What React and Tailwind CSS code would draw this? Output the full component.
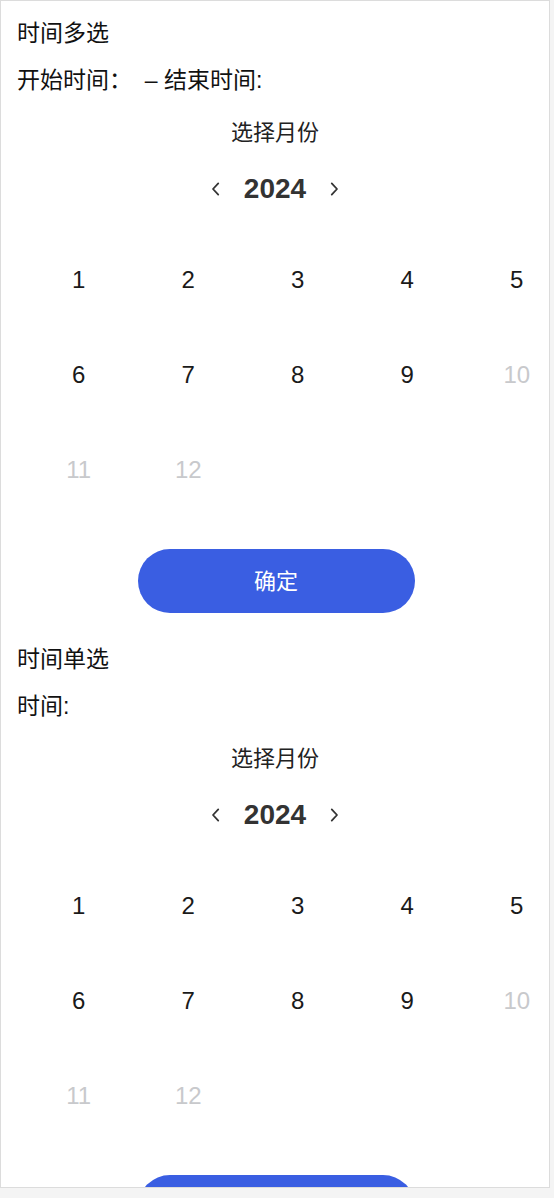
const months = [1, 2, 3, 4, 5, 6, 7, 8, 9, 10, 11, 12]

const ChevronLeft = () => (
  <svg width="18" height="18" viewBox="0 0 24 24" fill="none" stroke="#333" strokeWidth="2.4" strokeLinecap="round" strokeLinejoin="round">
    <path d="M15 4.5l-7 7.5 7 7.5" />
  </svg>
)

const ChevronRight = () => (
  <svg width="18" height="18" viewBox="0 0 24 24" fill="none" stroke="#333" strokeWidth="2.4" strokeLinecap="round" strokeLinejoin="round">
    <path d="M9 4.5l7 7.5-7 7.5" />
  </svg>
)

const MonthPicker = () => (
  <div>
    <div className="mt-[21px] h-[32px] leading-[32px] text-center text-[22px] text-[#222]">选择月份</div>
    <div className="mt-[20px] h-[40px] flex items-center justify-center gap-[19px]">
      <ChevronLeft />
      <span className="text-[28px] font-bold text-[#333]">2024</span>
      <ChevronRight />
    </div>
    <div className="mt-[23px] ml-[23px] grid grid-cols-[repeat(5,109.5px)] w-[548px]">
      {months.map((m) => (
        <div
          key={m}
          className={
            "h-[95px] flex items-center justify-center text-[24px] " +
            (m >= 10 ? "text-[#c8c9cc]" : "text-[#1a1a1a]")
          }
        >
          {m}
        </div>
      ))}
    </div>
    <div className="mt-[32px] flex justify-center">
      <button className="ml-[2px] w-[277px] h-[64px] rounded-full bg-[#3a5ee2] text-white text-[22px]">确定</button>
    </div>
  </div>
)

const Section = ({ title, label }) => (
  <div className="pb-[30px]">
    <div className="px-[16px] h-[32px] leading-[32px] text-[23px] text-[#111]">{title}</div>
    <div className="px-[16px] mt-[15px] h-[32px] leading-[32px] text-[23px] text-[#111] whitespace-pre">{label}</div>
    <MonthPicker />
  </div>
)

export default function App() {
  return (
    <div
      className="min-h-screen bg-[#f4f4f4]"
      style={{ fontFamily: '"Liberation Sans", "Noto Sans CJK SC", sans-serif' }}
    >
      <div className="w-[550px] h-[1188px] bg-white border border-[#dcdcdc] overflow-hidden pt-[16px]">
        <Section title="时间多选" label="开始时间：  – 结束时间:" />
        <Section title="时间单选" label="时间:" />
      </div>
    </div>
  )
}
